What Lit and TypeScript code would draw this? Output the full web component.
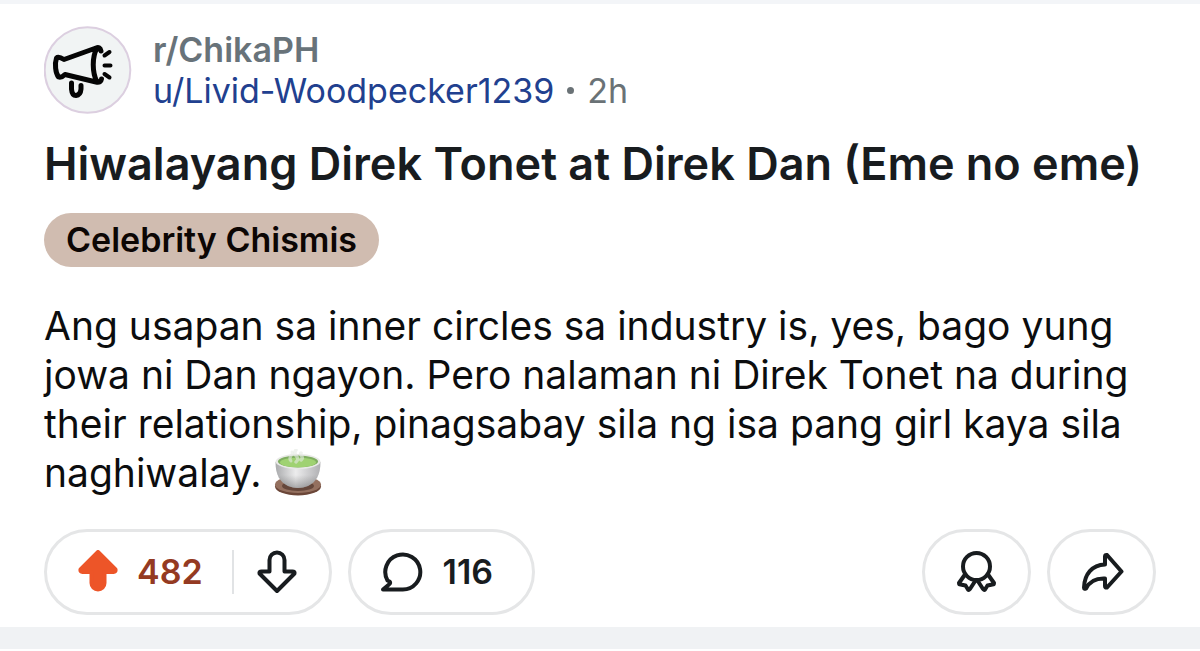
import { LitElement, html, css } from "lit";
import { customElement, state } from "lit/decorators.js";

@customElement("app-root")
export class AppRoot extends LitElement {
  static styles = css`
    :host {
      display: block;
      background: #fff;
      font-family: Inter, "Liberation Sans", sans-serif;
      color: #181c1f;
    }
    .feed {
      border-top: 4px solid #f3f5f8;
    }
    .post {
      padding: 22px 44px 12px;
      border-bottom: 22px solid #f0f2f4;
    }
    .header {
      display: flex;
      align-items: center;
      gap: 21px;
    }
    .avatar {
      display: block;
      flex: none;
      width: 88px;
      height: 88px;
    }
    .meta {
      font-size: 34px;
      line-height: 41px;
      color: #6a7276;
    }
    .meta a {
      text-decoration: none;
    }
    .community {
      color: #68737a;
      font-weight: 600;
    }
    .author {
      color: #21408f;
    }
    .byline {
      display: flex;
      align-items: center;
      gap: 13px;
    }
    .dot {
      width: 7px;
      height: 7px;
      border-radius: 50%;
      background: #6a7276;
    }
    .title {
      margin: 22px 0 21px;
      font-size: 45px;
      line-height: 56px;
      font-weight: 600;
    }
    .flair {
      display: inline-block;
      padding: 0 22px;
      border-radius: 27px;
      background: #d0bcb0;
      color: #0c0604;
      font-size: 34px;
      line-height: 54px;
      font-weight: 600;
      text-decoration: none;
      vertical-align: top;
    }
    .body {
      margin: 34px 0 32px;
      font-size: 39px;
      line-height: 49px;
      color: #0c0d0e;
    }
    .tea {
      width: 48px;
      height: 48px;
      margin-left: 2px;
      vertical-align: -10px;
    }
    .actions {
      display: flex;
      gap: 16px;
    }
    .spacer {
      flex: 1;
    }
    .pill {
      box-sizing: border-box;
      display: flex;
      align-items: center;
      height: 86px;
      border: 3px solid #e5e6e7;
      border-radius: 43px;
      background: #fff;
    }
    button {
      display: flex;
      align-items: center;
      justify-content: center;
      margin: 0;
      padding: 0;
      border: 0;
      background: none;
      color: inherit;
      font: 600 34px/40px Inter, "Liberation Sans", sans-serif;
      cursor: pointer;
    }
    .up {
      gap: 17px;
      padding: 0 29px;
      color: #943a22;
    }
    .down {
      padding: 0 30px 0 21px;
    }
    .divider {
      width: 2px;
      height: 44px;
      background: #e1e3e5;
    }
    button.comment {
      gap: 20px;
      padding: 0 39px 0 28px;
    }
    button.round {
      width: 109px;
    }
    .icon {
      display: block;
      width: 44px;
      height: 44px;
      fill: none;
      stroke: #181c1f;
      stroke-width: 4;
      stroke-linejoin: round;
      stroke-linecap: round;
    }
    .icon.filled {
      fill: #ed5528;
      stroke: #ed5528;
    }
  `;

  @state() private upvoted = true;

  private toggleVote() {
    this.upvoted = !this.upvoted;
  }

  render() {
    return html`
      <main class="feed">
        <article class="post">
          <header class="header">
            <svg class="avatar" viewBox="0 0 88 88" role="img" aria-label="ChikaPH">
              <circle cx="43.500" cy="44" r="42.8" fill="#f1f4f4" stroke="#dccfe0" stroke-width="2" />
              <g fill="none" stroke="#050505" stroke-width="5" stroke-linecap="round" stroke-linejoin="round">
                <path d="M12.500 32Q14.500 30 20 33.500L52 22Q56 20.500 57 25M12.500 32C10.500 38 11.500 47 14.500 51Q17.500 52 21 48.500L52 56Q57 57 57.500 53M53 22C48 31 48 46 53 56" />
                <path d="M27.500 57V63Q28 69.500 32 69.500Q36.500 69 37 63V59.500" />
                <path d="M60.500 29.500L65.500 26M60.500 39.500H66.500M60.500 48L65.500 51.500" stroke-width="4" />
              </g>
            </svg>
            <div class="meta">
              <div><a class="community" href="#community">r/ChikaPH</a></div>
              <div class="byline">
                <a class="author" href="#author">u/Livid-Woodpecker1239</a>
                <span class="dot"></span>
                <time>2h</time>
              </div>
            </div>
          </header>

          <h1 class="title">Hiwalayang Direk Tonet at Direk Dan (Eme no eme)</h1>
          <a class="flair" href="#flair">Celebrity Chismis</a>

          <p class="body">
            Ang usapan sa inner circles sa industry is, yes, bago yung jowa ni Dan ngayon. Pero nalaman ni
            Direk Tonet na during their relationship, pinagsabay sila ng isa pang girl kaya sila naghiwalay.
            <svg class="tea" viewBox="0 0 48 48" role="img" aria-label="Teacup">
              <defs>
                <linearGradient id="cup" x1="0" x2="1" y1="0" y2="0">
                  <stop offset="0" stop-color="#a9aaac" />
                  <stop offset=".45" stop-color="#ececed" />
                  <stop offset="1" stop-color="#b0b0b3" />
                </linearGradient>
                <linearGradient id="shade" x1="0" x2="0" y1="0" y2="1">
                  <stop offset=".5" stop-color="#555" stop-opacity="0" />
                  <stop offset="1" stop-color="#444" stop-opacity=".4" />
                </linearGradient>
              </defs>
              <ellipse cx="24" cy="37.500" rx="23" ry="9" fill="#6b4638" />
              <ellipse cx="24" cy="35.500" rx="23" ry="8.500" fill="#94705f" />
              <ellipse cx="24" cy="37" rx="16" ry="5" fill="#65473b" />
              <path d="M1.500 13C1.500 26 6 33 14 37Q24 41 34 37C42 33 46.500 26 46.500 13Z" fill="url(#cup)" />
              <path d="M1.500 13C1.500 26 6 33 14 37Q24 41 34 37C42 33 46.500 26 46.500 13Z" fill="url(#shade)" />
              <ellipse cx="24" cy="12.500" rx="22.500" ry="7.500" fill="#e8e9e6" />
              <ellipse cx="24" cy="12.500" rx="20" ry="6" fill="#7fae60" />
              <ellipse cx="24" cy="13.500" rx="18" ry="4.800" fill="#9fd272" />
              <g fill="none" stroke="#e4e9e2" stroke-linecap="round">
                <path d="M17 12C13 8 20 6 18 3" stroke-width="3" stroke-opacity=".6" />
                <path d="M22 13C28 8 17 6 22 1M27 11C31 8 25 6 27 4" stroke-width="3.5" stroke-opacity=".6" />
              </g>
            </svg>
          </p>

          <div class="actions">
            <div class="pill">
              <button class="up" aria-label="Upvote, 482" aria-pressed=${this.upvoted} @click=${this.toggleVote}>
                <svg class="icon filled" viewBox="0 0 44 44" aria-hidden="true">
                  <path d="M22 2L39.500 19.500Q40 22 37.500 22H28.500V33A6.500 6.500 0 0 1 15.500 33V22H6.500Q4 22 4.500 19.500Z" />
                </svg>
                <span>482</span>
              </button>
              <span class="divider"></span>
              <button class="down" aria-label="Downvote">
                <svg class="icon" viewBox="0 0 44 44" aria-hidden="true">
                  <path d="M22 41L39.500 23.500Q40 21.500 37.500 21.500H29.500V10A7.500 7.500 0 0 0 14.500 10V21.500H6.500Q4 21.500 4.500 23.500Z" />
                </svg>
              </button>
            </div>
            <button class="pill comment" aria-label="116 comments">
              <svg class="icon" viewBox="0 0 44 44" aria-hidden="true">
                <path d="M23.500 39.500H4L10 34.500Q12 33 10.500 31.500L8.500 30.500A17.500 17.500 0 1 1 23.500 39.500Z" />
              </svg>
              <span>116</span>
            </button>
            <span class="spacer"></span>
            <button class="pill round" aria-label="Give award">
              <svg class="icon" viewBox="0 0 44 44" aria-hidden="true">
                <circle cx="21.500" cy="16.500" r="13.500" />
                <path d="M10 24.500L4 33Q4 34.500 5.500 34.500L10.500 35.500L13 39.500Q14 40.500 15 39L20.500 30.500M33 24.500L39 33Q39 34.500 37.500 34.500L32.500 35.500L30 39.500Q29 40.500 28 39L22.500 30.500" />
              </svg>
            </button>
            <button class="pill round" aria-label="Share">
              <svg class="icon" viewBox="0 0 44 44" aria-hidden="true">
                <path d="M25 6.500Q25 4.500 27 5L41.500 21.500L27 37.500Q25 38 25 36V28.500C14 28 9 32.500 6 38.500Q4 39.500 4 37.500C4.500 24 12 15 25 14.500Z" />
              </svg>
            </button>
          </div>
        </article>
      </main>
    `;
  }
}
